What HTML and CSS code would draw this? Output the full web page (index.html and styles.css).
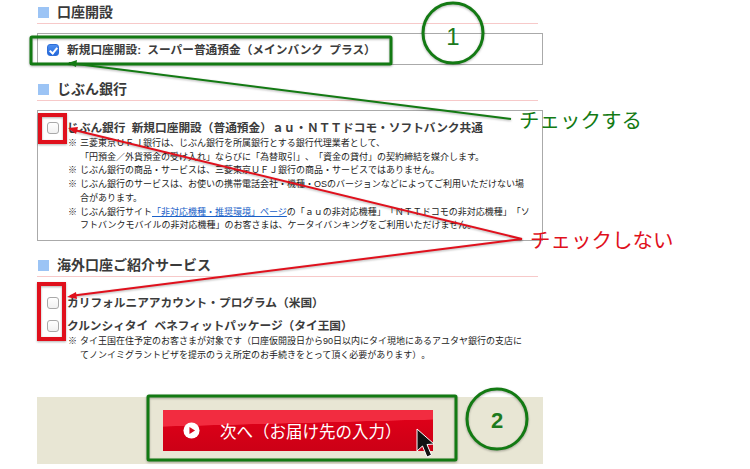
FILE: index.html
```html
<!DOCTYPE html>
<html lang="ja">
<head>
  <meta charset="UTF-8">
  <title>口座開設</title>
  <link rel="stylesheet" href="styles.css">
</head>
<body>
  <div class="page">
    <h2 class="heading">口座開設</h2>
    <div class="box box-main">
      <label class="option"><input type="checkbox" class="check" checked>新規口座開設: スーパー普通預金（メインバンク プラス）</label>
    </div>

    <h2 class="heading">じぶん銀行</h2>
    <div class="box box-jibun">
      <label class="option"><input type="checkbox" class="check">じぶん銀行 新規口座開設（普通預金）ａｕ・ＮＴＴドコモ・ソフトバンク共通</label>
      <ul class="notes">
        <li>三菱東京ＵＦＪ銀行は、じぶん銀行を所属銀行とする銀行代理業者として、<br>「円預金／外貨預金の受け入れ」ならびに「為替取引」、「資金の貸付」の契約締結を媒介します。</li>
        <li>じぶん銀行の商品・サービスは、三菱東京ＵＦＪ銀行の商品・サービスではありません。</li>
        <li>じぶん銀行のサービスは、お使いの携帯電話会社・機種・OSのバージョンなどによってご利用いただけない場<br>合があります。</li>
        <li>じぶん銀行サイト<a href="#">「非対応機種・推奨環境」ページ</a>の「ａｕの非対応機種」「ＮＴＴドコモの非対応機種」「ソ<br>フトバンクモバイルの非対応機種」のお客さまは、ケータイバンキングをご利用いただけません。</li>
      </ul>
    </div>

    <h2 class="heading">海外口座ご紹介サービス</h2>
    <div class="plain">
      <label class="option"><input type="checkbox" class="check">カリフォルニアアカウント・プログラム（米国）</label>
      <label class="option"><input type="checkbox" class="check">クルンシィタイ ベネフィットパッケージ（タイ王国）</label>
      <ul class="notes">
        <li>タイ王国在住予定のお客さまが対象です（口座仮開設日から90日以内にタイ現地にあるアユタヤ銀行の支店に<br>てノンイミグラントビザを提示のうえ所定のお手続きをとって頂く必要があります）。</li>
      </ul>
    </div>

    <div class="footer">
      <button type="button" class="next-btn">
        <svg class="play" viewBox="0 0 18 18"><circle cx="9" cy="9" r="8.500" fill="#fff"/><path d="M6.800 5.200 L12.800 9 L6.800 12.800 Z" fill="#d60a20"/></svg>
        <span>次へ（お届け先の入力）</span>
      </button>
    </div>
  </div>

  <!-- annotations drawn over the screenshot -->
  <svg class="marks" viewBox="0 0 750 469">
    <g class="green">
      <rect x="31" y="37" width="360" height="27" rx="1"/>
      <rect x="148" y="396" width="308" height="64" rx="1"/>
      <circle cx="453" cy="33" r="30"/>
      <circle cx="497" cy="419" r="30"/>
      <line x1="511" y1="119" x2="69" y2="63" class="thin"/>
      <path class="tip-green" d="M68 63 L77 60 L76 67 Z"/>
    </g>
    <g class="red">
      <rect x="40" y="115" width="25" height="27"/>
      <rect x="39" y="284" width="25" height="55"/>
      <line x1="522" y1="239" x2="70" y2="129" class="thin"/>
      <line x1="522" y1="239" x2="70" y2="296" class="thin"/>
      <path class="tip-red" d="M68 128 L78 127 L76 134 Z"/>
      <path class="tip-red" d="M67 297 L76 292 L77 299 Z"/>
    </g>
    <text x="453" y="45" class="num">1</text>
    <text x="497" y="428" class="num num-small">2</text>
    <text x="519" y="128" class="label label-green">チェックする</text>
    <text x="530" y="248" class="label label-red">チェックしない</text>
    <path class="cursor" d="M417 429 L417 451 L422.500 446 L427 457 L431.500 455 L427 444.500 L434 444 Z"/>
  </svg>
</body>
</html>
```

FILE: styles.css
```css
* { box-sizing: border-box; margin: 0; padding: 0; }
html, body {
  width: 750px;
  height: 469px;
  overflow: hidden;
  background-color: #fff;
}
body {
  position: relative;
  font-family: "Liberation Sans", "Noto Sans CJK JP", sans-serif;
  text-spacing-trim: space-all;
  color: #333;
}
.page {
  width: 506px;
  margin-left: 37px;
  padding-top: 1px;
}

.heading {
  display: flex;
  align-items: center;
  gap: 8px;
  height: 23px;
  margin-right: 5px;
  padding-left: 1px;
  border-bottom: 1px solid #f7c9c9;
  font-size: 14px;
  font-weight: bold;
  line-height: 20px;
  color: #3a3a3a;
}
.heading::before {
  content: "";
  width: 11px;
  height: 11px;
  background-color: #9cc4f5;
}

.box {
  margin-top: 9px;
  border: 1px solid #aaa;
}
.box-main {
  height: 32px;
  margin-bottom: 13px;
  padding: 8px 9px 0;
}
.box-jibun {
  height: 131px;
  margin-bottom: 13px;
  padding: 9px 9px 0;
}
.plain {
  padding: 18px 10px 0;
}
.plain .option + .option {
  margin-top: 7px;
}

.option {
  display: flex;
  align-items: center;
  gap: 8px;
  height: 16px;
  font-size: 11.700px;
  font-weight: bold;
  line-height: 16px;
  word-spacing: 3px;
  white-space: nowrap;
  color: #3c3c3c;
}
.check {
  appearance: none;
  position: relative;
  flex-shrink: 0;
  width: 12px;
  height: 12px;
  border: 1px solid #a9a9a9;
  border-radius: 3px;
  background: linear-gradient(#fff, #f1f1f1);
}
.check:checked {
  border-color: #2f6fd8;
  background: linear-gradient(#4d8ff0, #2468dc);
}
.check:checked::after {
  content: "";
  position: absolute;
  left: 3px;
  top: 1px;
  width: 3px;
  height: 6px;
  border: solid #fff;
  border-width: 0 2px 2px 0;
  transform: rotate(40deg);
}

.notes {
  margin: 1px 0 0 21px;
  list-style: none;
  font-size: 9px;
  line-height: 13.700px;
  white-space: nowrap;
  color: #222;
}
.notes li {
  position: relative;
  padding-left: 12px;
}
.notes li::before {
  content: "※";
  position: absolute;
  left: 0;
}
.notes a {
  color: #1a5fc8;
}

.footer {
  display: flex;
  align-items: center;
  height: 67px;
  margin-top: 35px;
  padding-left: 126px;
  background-color: #e8e6d4;
}
.next-btn {
  display: flex;
  align-items: center;
  gap: 20px;
  width: 270px;
  height: 41px;
  padding-left: 20px;
  border: none;
  background:
    linear-gradient(178.500deg, #f22c40 0 34%, rgba(242,44,64,0) 35%),
    linear-gradient(#e20019, #cc0016);
  color: #fff;
  font-family: inherit;
  font-size: 16.500px;
  white-space: nowrap;
}
.play {
  width: 17px;
  height: 17px;
}

.marks {
  position: absolute;
  left: 0;
  top: 0;
  width: 750px;
  height: 469px;
}
.green rect, .green circle, .green line {
  fill: none;
  stroke: #137a13;
  stroke-width: 3;
  filter: drop-shadow(0 1px 1px rgba(0,0,0,.3));
}
.red rect, .red line {
  fill: none;
  stroke: #e0101c;
  stroke-width: 4;
  filter: drop-shadow(0 1px 1px rgba(0,0,0,.3));
}
.marks .thin {
  stroke-width: 2;
}
.tip-green { fill: #137a13; }
.tip-red { fill: #e0101c; }
.num {
  font-size: 24px;
  fill: #1d7a1d;
  text-anchor: middle;
  font-family: "Liberation Sans", sans-serif;
}
.num-small {
  font-size: 22px;
  font-weight: bold;
}
.label {
  font-size: 20.500px;
  font-family: "Noto Sans CJK JP", sans-serif;
}
.label-green { fill: #137a13; }
.label-red { fill: #e0101c; }
.cursor {
  fill: #111;
  stroke: #fff;
  stroke-width: 1;
}
```
